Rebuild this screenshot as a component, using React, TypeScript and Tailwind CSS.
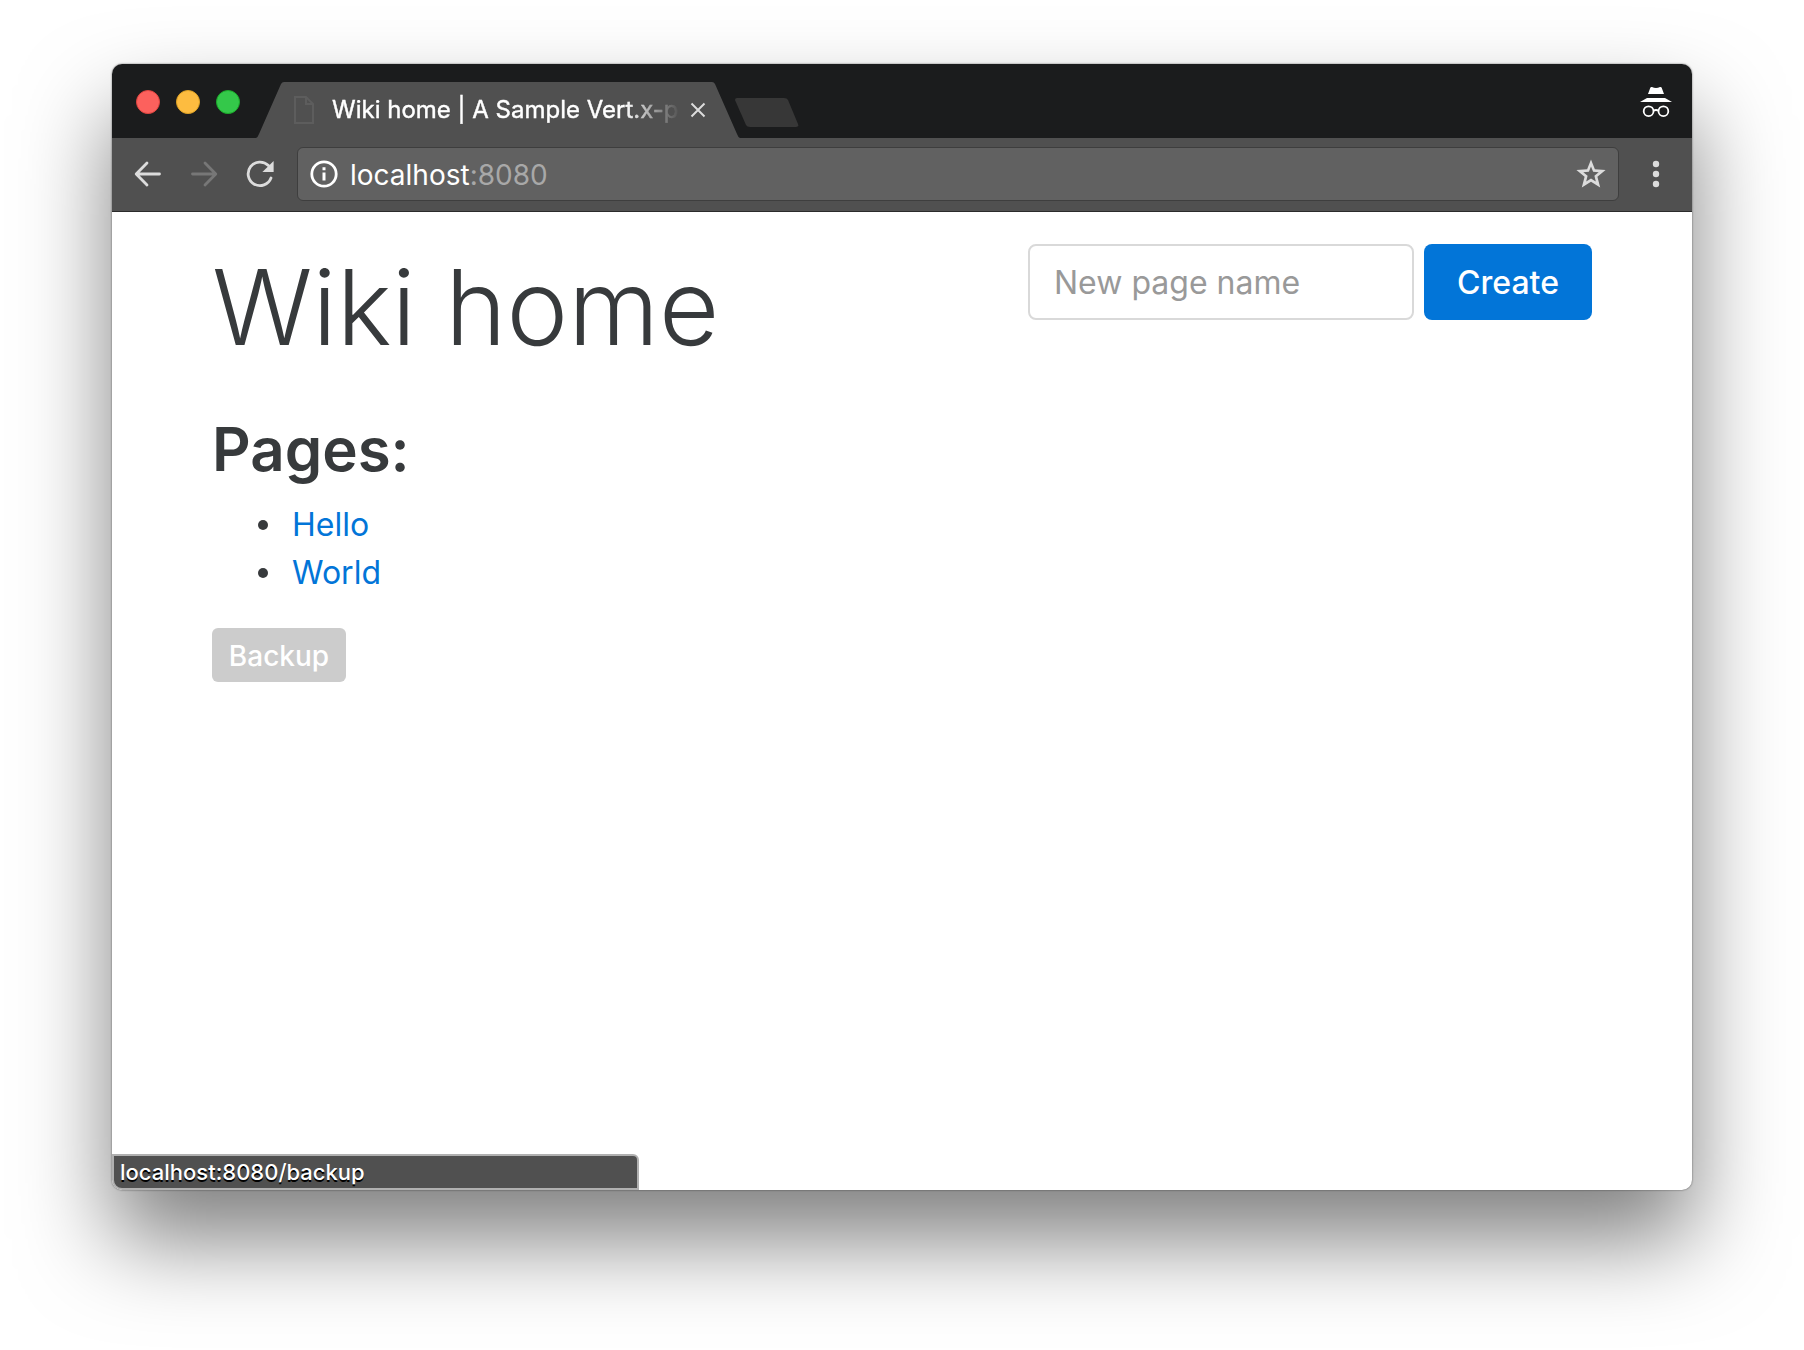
import React from "react";

const BackIcon = ({ className }: { className: string }) => (
  <svg viewBox="0 0 28 28" className={className} fill="none" stroke="currentColor" strokeWidth="2.8" strokeLinecap="round" strokeLinejoin="round">
    <path d="M25.5 14H2.5M13 3L2.2 14L13 25" />
  </svg>
);

const ReloadIcon = () => (
  <svg viewBox="0 0 28 28" className="size-7">
    <path d="M25 18A11.8 11.8 0 1 1 22.4 5.6" fill="none" stroke="currentColor" strokeWidth="2.8" strokeLinecap="round" />
    <path d="M27.6 1V12H16.4Z" fill="currentColor" />
  </svg>
);

const InfoIcon = () => (
  <svg viewBox="0 0 28 28" className="size-7 shrink-0 text-white">
    <circle cx="14" cy="14" r="12.2" fill="none" stroke="currentColor" strokeWidth="2.8" />
    <path d="M12.5 7.3h3v3h-3zM12.5 12.5h3v8h-3z" fill="currentColor" />
  </svg>
);

const StarIcon = () => (
  <svg viewBox="0 0 30 30" className="size-[30px]">
    <path
      fill="currentColor"
      fillRule="evenodd"
      d="M15 .5L18.9 10.3L29.6 11L21.4 17.8L24.2 28.6L15 22.7L5.8 28.6L8.6 17.8L.4 11L11.1 10.3ZM15 7.6L12.9 12.8L7.3 13.2L11.6 16.8L10.2 22.5L15 19.4L19.8 22.5L18.4 16.8L22.7 13.2L17.1 12.8Z"
    />
  </svg>
);

const IncognitoIcon = () => (
  <svg viewBox="0 0 32 32" className="size-8 text-white">
    <path d="M10.4 1.4Q11 .8 12 1.1Q16 2.8 20 1.1Q21 .8 21.6 1.4L24 8H8Z" fill="currentColor" />
    <path d="M0 16L7 12H25L32 16Z" fill="currentColor" />
    <g fill="none" stroke="currentColor" strokeWidth="1.8">
      <circle cx="8.6" cy="25.2" r="4.9" />
      <circle cx="23.4" cy="25.2" r="4.9" />
      <path d="M13.4 24.6Q16 23.4 18.6 24.6" />
    </g>
  </svg>
);

const pages = ["Hello", "World"];

function TabStrip() {
  return (
    <div className="flex h-[74px] items-end bg-[#1b1c1d]">
      <div className="flex gap-4 self-center pl-6 pt-0.5">
        <button aria-label="Close window" className="size-6 rounded-full border border-[#e0443e] bg-[#fc615d]" />
        <button aria-label="Minimize window" className="size-6 rounded-full border border-[#dea123] bg-[#fdbc40]" />
        <button aria-label="Zoom window" className="size-6 rounded-full border border-[#1aab29] bg-[#34c84a]" />
      </div>
      <div className="relative ml-4 flex h-14 w-[484px] items-center pl-[38px] pr-[34px]">
        <svg viewBox="0 0 484 56" className="absolute inset-0 size-full" preserveAspectRatio="none">
          <path d="M0 56Q2 55 3 52L25 2Q26 0 28 0H456Q458 0 459 2L481 52Q482 55 484 56Z" fill="#505050" />
        </svg>
        <svg viewBox="0 0 20 28" className="relative h-7 w-5 shrink-0" fill="none" stroke="#5d5d5d" strokeWidth="2">
          <path d="M1 1H12L19 8V27H1ZM12 1V8H19" />
        </svg>
        <span className="relative ml-[18px] flex-1 overflow-hidden whitespace-nowrap text-2xl text-white [mask-image:linear-gradient(to_right,black_84%,transparent)] [-webkit-text-stroke:0.4px]">
          Wiki home | A Sample Vert.x-po
        </span>
        <button aria-label="Close tab" className="relative ml-2.5 text-[#dcdcdc]">
          <svg viewBox="0 0 16 16" className="size-4" stroke="currentColor" strokeWidth="2">
            <path d="M1.5 1.5L14.5 14.5M14.5 1.5L1.5 14.5" />
          </svg>
        </button>
      </div>
      <button aria-label="New tab" className="-ml-[5px] mb-[11px]">
        <svg viewBox="0 0 64 29" className="h-[29px] w-16">
          <path d="M2 0H49Q52 0 53 2L63 26Q64 29 61 29H15Q12 29 11 27L0 2Q0 0 2 0Z" fill="#373737" />
        </svg>
      </button>
      <div className="ml-auto self-center pr-5 pt-0.5">
        <IncognitoIcon />
      </div>
    </div>
  );
}

function Toolbar() {
  return (
    <div className="flex h-[74px] items-center border-b border-[#2b2b2b] bg-[#505050] pb-px pl-[22px] pr-8 text-[#dcdcdc]">
      <button aria-label="Back">
        <BackIcon className="size-7" />
      </button>
      <button aria-label="Forward" disabled className="ml-7 text-[#777777]">
        <BackIcon className="size-7 rotate-180" />
      </button>
      <button aria-label="Reload" className="ml-7">
        <ReloadIcon />
      </button>
      <div className="ml-[23px] flex h-[54px] flex-1 items-center rounded-md border border-[#3e3e3e] bg-[#616161] px-3">
        <InfoIcon />
        <a href="#" className="ml-3 flex-1 pt-0.5 text-[28px] leading-8 text-white">
          localhost<span className="text-[#a8a8a8]">:8080</span>
        </a>
        <button aria-label="Bookmark this page">
          <StarIcon />
        </button>
      </div>
      <button aria-label="Menu" className="ml-[33px]">
        <svg viewBox="0 0 8 28" className="h-7 w-2" fill="currentColor">
          <circle cx="4" cy="4" r="3.2" />
          <circle cx="4" cy="14" r="3.2" />
          <circle cx="4" cy="24" r="3.2" />
        </svg>
      </button>
    </div>
  );
}

export default function App() {
  return (
    <div className="flex min-h-screen flex-col bg-white px-28 pb-40 pt-16 font-['Inter',sans-serif]">
      <div className="relative flex flex-1 flex-col overflow-hidden rounded-[10px] bg-white shadow-[0_0_2px_rgba(0,0,0,0.6),0_50px_90px_rgba(0,0,0,0.5)]">
        <TabStrip />
        <Toolbar />
        <main className="px-[100px] pt-8 text-[32px] leading-[48px] text-[#373a3c]">
          <div className="flex items-start justify-between">
            <h1 className="text-[104px] font-light leading-[126px]">Wiki home</h1>
            <form className="flex gap-2.5" onSubmit={(e) => e.preventDefault()}>
              <input
                aria-label="New page name"
                placeholder="New page name"
                className="h-[76px] w-[386px] rounded-lg border-2 border-[#d9d9d9] px-6 placeholder:text-[#999999]"
              />
              <button type="submit" className="h-[76px] w-[168px] rounded-lg bg-[#0275d8] pt-0.5 font-medium text-white">
                Create
              </button>
            </form>
          </div>
          <h2 className="mt-11 text-[60px] font-semibold leading-[70px]">Pages:</h2>
          <ul className="mt-[17px] pl-[46px]">
            {pages.map((page) => (
              <li key={page} className="flex items-center gap-6 before:size-2.5 before:rounded-full before:bg-[#373a3c]">
                <a href="#" className="text-[#0275d8]">
                  {page}
                </a>
              </li>
            ))}
          </ul>
          <button className="mt-[31px] block h-[54px] w-[134px] rounded-md bg-[#cccccc] pt-0.5 text-[28px] font-medium leading-8 text-white">
            Backup
          </button>
        </main>
        <div className="absolute bottom-0 left-0 h-9 w-[527px] rounded-bl-[10px] rounded-tr-md border-2 border-[#b0b0b0] bg-[#505050] pl-1.5 text-[22px] font-medium leading-8 text-white [text-shadow:0_2px_0_black]">
          localhost:8080/backup
        </div>
      </div>
    </div>
  );
}
